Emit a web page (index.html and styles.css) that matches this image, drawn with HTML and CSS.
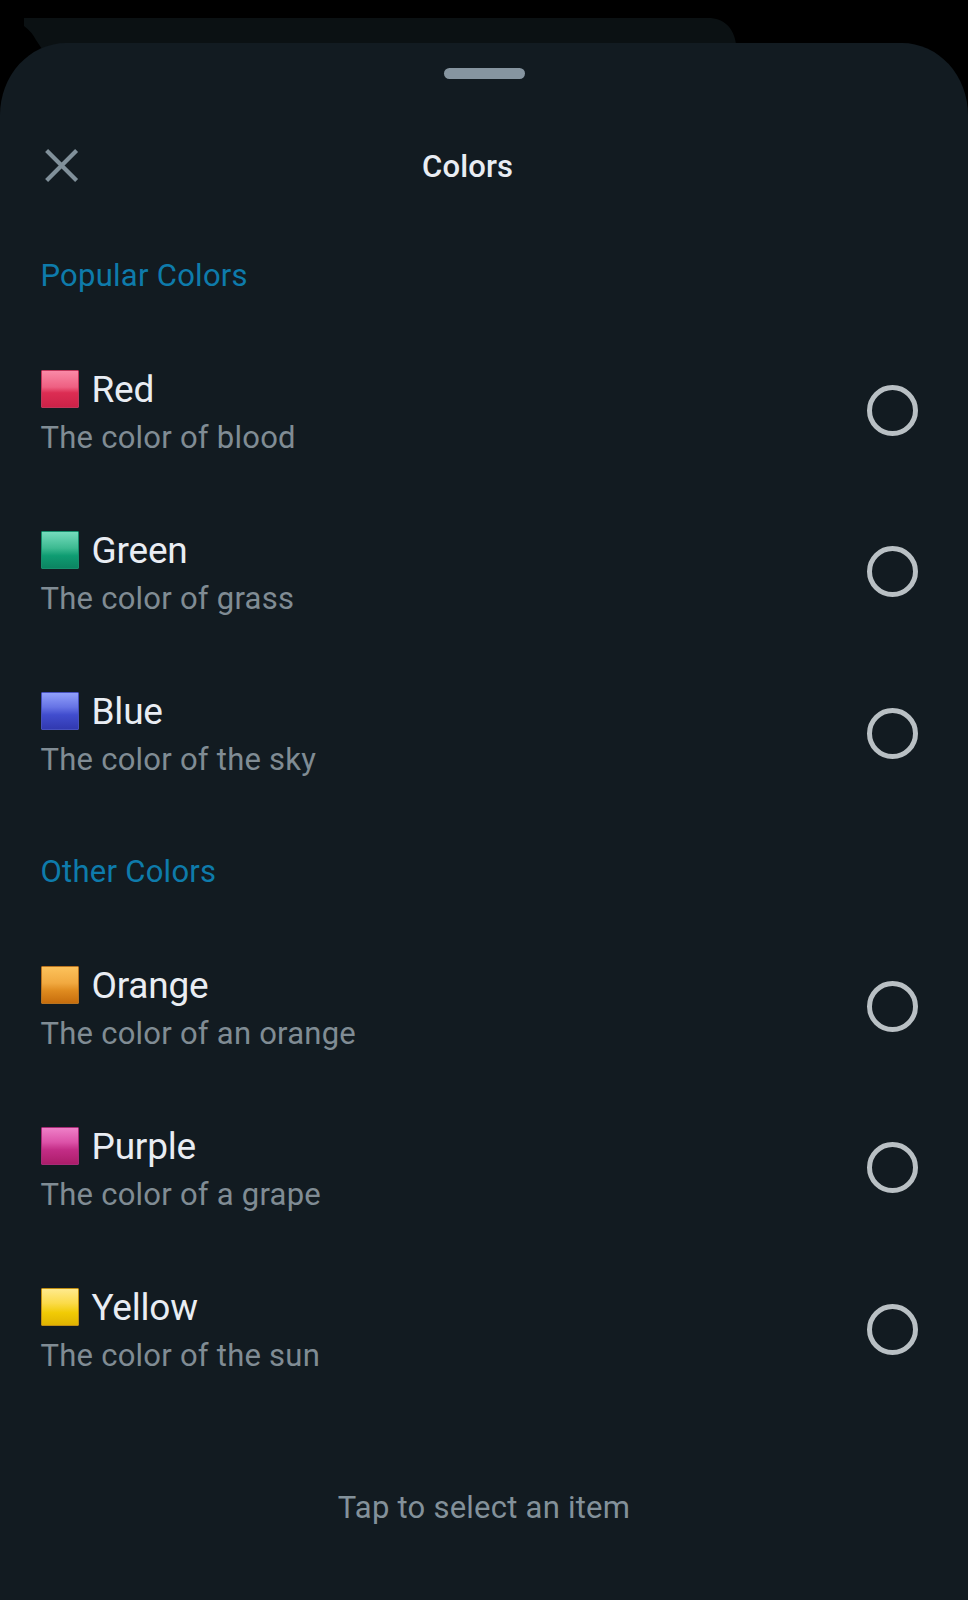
FILE: index.html
```html
<!DOCTYPE html>
<html lang="en">
<head>
<meta charset="utf-8">
<title>Colors</title>
<link rel="stylesheet" href="styles.css">
</head>
<body>
<div class="screen">
  <svg class="backdrop" width="720" height="40" viewBox="0 0 720 40" aria-hidden="true"><path d="M0 0H684C700 0 710 10 712 26V40H24L12 22Q8 14 0 8Z" fill="#0b1113"/></svg>
  <main class="sheet">
    <div class="handle"></div>
    <header class="topbar">
      <svg class="close" width="34" height="34" viewBox="0 0 34 34" role="img" aria-label="Close"><path d="M1.6 1.6L31.6 31.6M31.6 1.6L1.6 31.6" stroke="#80909a" stroke-width="4.2" fill="none"/></svg>
      <h1 class="title">Colors</h1>
    </header>
    <section>
      <h2 class="heading">Popular Colors</h2>
      <div class="item"><div class="text"><div class="name"><span class="swatch red"></span><span class="label">Red</span></div><div class="desc">The color of blood</div></div><span class="radio"></span></div>
      <div class="item"><div class="text"><div class="name"><span class="swatch green"></span><span class="label">Green</span></div><div class="desc">The color of grass</div></div><span class="radio"></span></div>
      <div class="item"><div class="text"><div class="name"><span class="swatch blue"></span><span class="label">Blue</span></div><div class="desc">The color of the sky</div></div><span class="radio"></span></div>
    </section>
    <section>
      <h2 class="heading">Other Colors</h2>
      <div class="item"><div class="text"><div class="name"><span class="swatch orange"></span><span class="label">Orange</span></div><div class="desc">The color of an orange</div></div><span class="radio"></span></div>
      <div class="item"><div class="text"><div class="name"><span class="swatch purple"></span><span class="label">Purple</span></div><div class="desc">The color of a grape</div></div><span class="radio"></span></div>
      <div class="item"><div class="text"><div class="name"><span class="swatch yellow"></span><span class="label">Yellow</span></div><div class="desc">The color of the sun</div></div><span class="radio"></span></div>
    </section>
    <p class="hint">Tap to select an item</p>
  </main>
</div>
</body>
</html>
```
FILE: styles.css
```css
* { box-sizing: border-box; }
body {
  margin: 0;
  background: #000;
  font-family: Roboto, "Liberation Sans", sans-serif;
}
.screen {
  position: relative;
  height: 1600px;
  padding-top: 43px;
  overflow: hidden;
}
.backdrop { position: absolute; left: 24px; top: 18px; }
.sheet {
  position: relative;
  height: 1557px;
  background: #121b21;
  border-radius: 66px 66px 0 0 / 72px 72px 0 0;
  padding-top: 25px;
}
.handle {
  width: 81px;
  height: 10.5px;
  margin: 0 auto 0.5px;
  border-radius: 6px;
  background: #8695a0;
}
.topbar {
  height: 139px;
  display: flex;
  align-items: flex-start;
  padding: 70px 0 0 45px;
}
.close { display: block; flex: none; }
.title {
  margin: 0 0 0 343px;
  font-size: 31px;
  line-height: 36px;
  font-weight: 500;
  letter-spacing: 0.15px;
  color: #e9edf3;
}
.heading {
  margin: 0;
  height: 112px;
  padding: 40px 40.5px 0;
  font-size: 31px;
  line-height: 36px;
  font-weight: 400;
  letter-spacing: 0.26px;
  color: #0e7bab;
}
.item {
  height: 161.33px;
  display: flex;
  justify-content: space-between;
  align-items: center;
  padding: 0 50px 0 41px;
}
.text { padding-top: 2px; }
.name {
  display: flex;
  align-items: center;
  gap: 12.5px;
  height: 44px;
  margin-bottom: 8px;
  font-size: 37px;
  line-height: 44px;
  letter-spacing: -0.2px;
  color: #e9edf3;
}
.swatch {
  width: 38px;
  height: 38px;
  margin-bottom: 2px;
  border: 1px solid;
  border-radius: 1px;
  background-origin: border-box;
}
.red { border-color: #bf365a; background-image: linear-gradient(#fa8ca9, #ee6082 45%, #dc2d53 60%, #cb2147); }
.green { border-color: #168e6c; background-image: linear-gradient(#79dec0, #3dba91 45%, #0f9c72 65%, #0b8260); }
.blue { border-color: #4650bd; background-image: linear-gradient(#94a3fc, #6673e5 40%, #414dce 60%, #3038ae); }
.orange { border-color: #b87320; background-image: linear-gradient(#fdc45d, #f1a940 45%, #df8b1f 65%, #c56b0b); }
.purple { border-color: #a62b77; background-image: linear-gradient(#f083ca, #dc52a8 40%, #c32d86 60%, #aa1c68); }
.yellow { border-color: #c18f13; background-image: linear-gradient(#ffeb92, #fbdb49 40%, #f1cb05 65%, #dfb200); }
.desc {
  margin-left: -0.5px;
  font-size: 31px;
  line-height: 36px;
  letter-spacing: 0.24px;
  color: #808c94;
}
.radio {
  width: 51px;
  height: 51px;
  border: 5px solid #b9c0c4;
  border-radius: 50%;
}
.hint {
  margin: 80px 0 0;
  font-size: 31px;
  line-height: 36px;
  letter-spacing: 0.24px;
  text-align: center;
  color: #83919a;
}
```
